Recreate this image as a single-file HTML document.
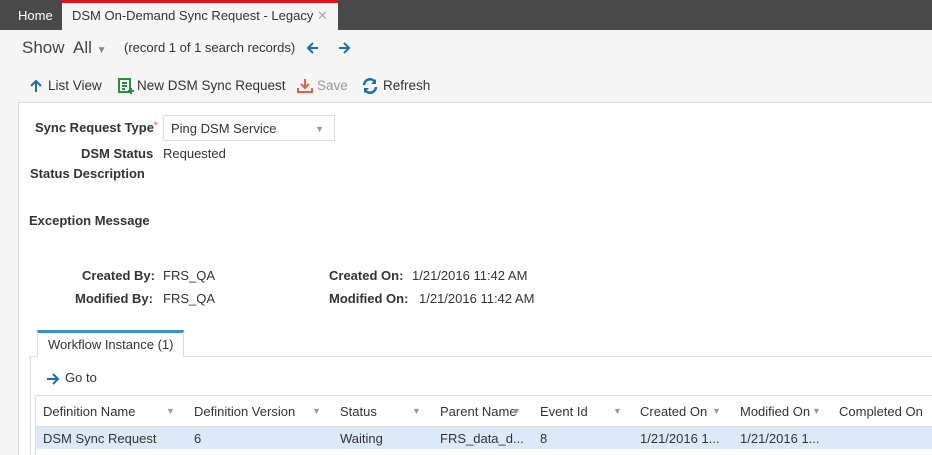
<!DOCTYPE html>
<html><head><style>
*{box-sizing:border-box;margin:0;padding:0}
html,body{width:932px;height:455px;overflow:hidden}
body{background:#f5f5f5;font-family:"Liberation Sans",sans-serif;font-size:13px;color:#333;position:relative}
.a{position:absolute;white-space:nowrap}
.b{font-weight:bold}
.f{color:#999;font-size:9px}
svg{position:absolute}
</style></head><body>
<div class="a" style="left:0;top:0;width:932px;height:30px;background:#4a4a4a"></div>
<div class="a" style="left:18px;top:8px;color:#fff;font-size:13px">Home</div>
<div class="a" style="left:62px;top:0;width:276px;height:30px;background:#f5f5f5;border-top:3px solid #e8141c"></div>
<div class="a" style="left:72px;top:8px;font-size:13px">DSM On-Demand Sync Request - Legacy <span style="color:#aaa">✕</span></div>
<div class="a" style="left:22px;top:38px;font-size:17px;color:#444">Show&nbsp; All <span style="font-size:10px;color:#888">▼</span></div>
<div class="a" style="left:124px;top:40px;font-size:13px">(record 1 of 1 search records)</div>
<svg style="left:306px;top:41px" width="14" height="14" viewBox="0 0 14 14"><path d="M12 7H2M7 2L2 7l5 5" stroke="#1a6fb0" stroke-width="2" fill="none"/></svg>
<svg style="left:337px;top:41px" width="14" height="14" viewBox="0 0 14 14"><path d="M2 7h10M7 2l5 5-5 5" stroke="#1a6fb0" stroke-width="2" fill="none"/></svg>
<svg style="left:29px;top:79px" width="14" height="14" viewBox="0 0 14 14"><path d="M7 13V2M2 7l5-5 5 5" stroke="#1a6fb0" stroke-width="2" fill="none"/></svg>
<div class="a" style="left:48px;top:78px;font-size:13.5px">List View</div>
<svg style="left:118px;top:78px" width="16" height="16" viewBox="0 0 16 16"><rect x="1" y="1" width="11" height="13" fill="none" stroke="#2e8b3a" stroke-width="2"/><path d="M4 5h5M4 8h5M4 11h3M13 10v6M10 13h6" stroke="#2e8b3a" stroke-width="2"/></svg>
<div class="a" style="left:137px;top:78px;font-size:13.5px">New DSM Sync Request</div>
<svg style="left:297px;top:78px" width="16" height="16" viewBox="0 0 16 16"><path d="M8 1v9M4 6l4 4 4-4M1 10v4h14v-4" stroke="#e06050" stroke-width="2" fill="none"/></svg>
<div class="a" style="left:317px;top:78px;font-size:13.5px;color:#999">Save</div>
<svg style="left:362px;top:78px" width="16" height="16" viewBox="0 0 16 16"><path d="M2 7a6 6 0 0 1 11-3M14 9a6 6 0 0 1-11 3" stroke="#1a6fb0" stroke-width="2.5" fill="none"/><path d="M14 1v5h-5zM2 15v-5h5z" fill="#1a6fb0"/></svg>
<div class="a" style="left:383px;top:78px;font-size:13.5px">Refresh</div>
<div class="a" style="left:18px;top:102px;width:920px;height:360px;background:#fff;border:1px solid #ddd"></div>
<div class="a b" style="left:35px;top:120px">Sync Request Type<span style="color:#f08040;font-size:9px;vertical-align:top">*</span></div>
<div class="a" style="left:163px;top:115px;width:172px;height:26px;border:1px solid #ddd;padding:5px 7px">Ping DSM Service<span style="position:absolute;right:10px;top:8px" class="f">▼</span></div>
<div class="a b" style="left:81px;top:146px">DSM Status</div>
<div class="a" style="left:163px;top:146px">Requested</div>
<div class="a b" style="left:30px;top:166px">Status Description</div>
<div class="a b" style="left:29px;top:213px">Exception Message</div>
<div class="a b" style="left:82px;top:268px">Created By:</div>
<div class="a" style="left:163px;top:268px">FRS_QA</div>
<div class="a b" style="left:75px;top:291px">Modified By:</div>
<div class="a" style="left:163px;top:291px">FRS_QA</div>
<div class="a b" style="left:329px;top:268px">Created On:</div>
<div class="a" style="left:412px;top:268px">1/21/2016 11:42 AM</div>
<div class="a b" style="left:329px;top:291px">Modified On:</div>
<div class="a" style="left:419px;top:291px">1/21/2016 11:42 AM</div>
<div class="a" style="left:30px;top:356px;width:910px;height:110px;border:1px solid #ddd;border-right:none"></div>
<div class="a" style="left:37px;top:330px;width:147px;height:27px;background:#fff;border:1px solid #ddd;border-bottom:none;border-top:3px solid #3a8fc8;padding:4px 10px">Workflow Instance (1)</div>
<svg style="left:46px;top:372px" width="14" height="14" viewBox="0 0 14 14"><path d="M1 7h11M7 2l5 5-5 5" stroke="#1a6fb0" stroke-width="2" fill="none"/></svg>
<div class="a" style="left:65px;top:370px">Go to</div>
<div class="a" style="left:35px;top:395px;width:900px;height:70px;border:1px solid #ddd;border-right:none"></div>
<div class="a" style="left:36px;top:427px;width:900px;height:22px;background:#dbe9f8"></div>
<div class="a" style="left:36px;top:396px;width:900px;height:31px;border-bottom:1px solid #ddd"></div>
<div class="a" style="left:43px;top:404px">Definition Name</div><div class="a f" style="left:166px;top:406px">▼</div>
<div class="a" style="left:194px;top:404px">Definition Version</div><div class="a f" style="left:312px;top:406px">▼</div>
<div class="a" style="left:340px;top:404px">Status</div><div class="a f" style="left:412px;top:406px">▼</div>
<div class="a" style="left:440px;top:404px">Parent Name</div><div class="a f" style="left:512px;top:406px">▼</div>
<div class="a" style="left:540px;top:404px">Event Id</div><div class="a f" style="left:613px;top:406px">▼</div>
<div class="a" style="left:640px;top:404px">Created On</div><div class="a f" style="left:712px;top:406px">▼</div>
<div class="a" style="left:740px;top:404px">Modified On</div><div class="a f" style="left:812px;top:406px">▼</div>
<div class="a" style="left:839px;top:404px">Completed On</div>
<div class="a" style="left:43px;top:431px">DSM Sync Request</div>
<div class="a" style="left:194px;top:431px">6</div>
<div class="a" style="left:340px;top:431px">Waiting</div>
<div class="a" style="left:440px;top:431px">FRS_data_d...</div>
<div class="a" style="left:540px;top:431px">8</div>
<div class="a" style="left:640px;top:431px">1/21/2016 1...</div>
<div class="a" style="left:740px;top:431px">1/21/2016 1...</div>
</body></html>
